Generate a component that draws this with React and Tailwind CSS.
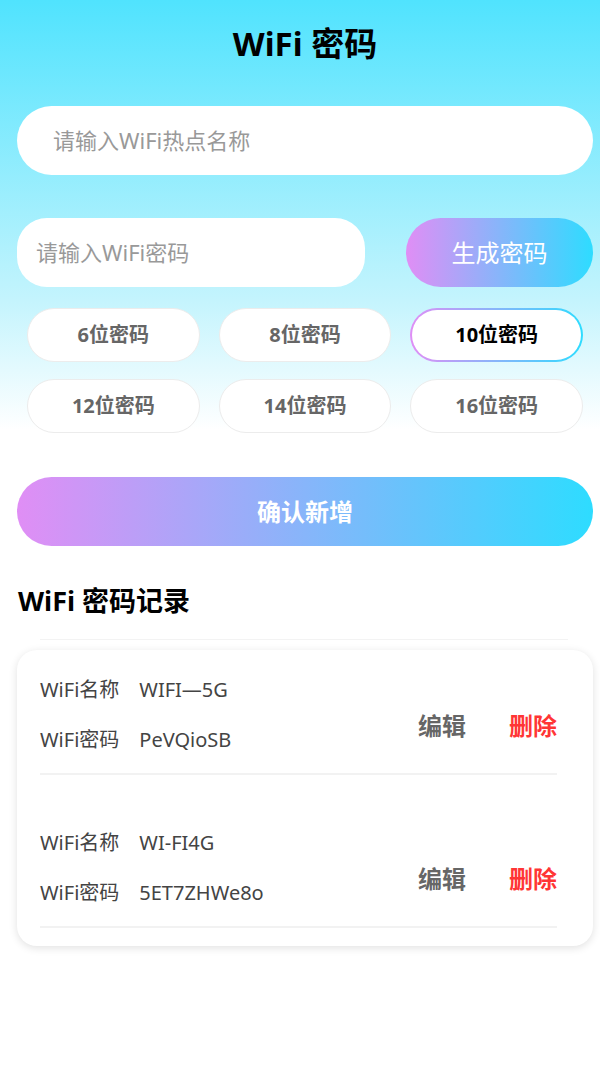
import { useState } from "react";

const FONT = { fontFamily: '"Noto Sans", "Noto Sans CJK SC", sans-serif' };

const lengths = [6, 8, 10, 12, 14, 16];

const records = [
  { name: "WIFI—5G", pwd: "PeVQioSB", pt: "pt-[26px]" },
  { name: "WI-FI4G", pwd: "5ET7ZHWe8o", pt: "pt-[54px]" },
];

function Chip({ n, active, onClick }) {
  if (active) {
    return (
      <button
        onClick={onClick}
        className="h-[54px] rounded-full p-[2px] bg-[linear-gradient(90deg,#e08ef5,#2edcff)]"
      >
        <div className="h-full w-full rounded-full bg-white flex items-center justify-center text-[20px] font-bold text-black">
          {n}位密码
        </div>
      </button>
    );
  }
  return (
    <button
      onClick={onClick}
      className="h-[54px] rounded-full bg-white border border-[#ececec] flex items-center justify-center text-[20px] font-bold text-[#666]"
    >
      {n}位密码
    </button>
  );
}

export default function App() {
  const [len, setLen] = useState(10);

  return (
    <div
      style={FONT}
      className="h-screen overflow-hidden pl-[17px] pr-[7px] bg-[linear-gradient(180deg,#50e3fe_0px,#c4f4fd_300px,#ffffff_430px,#ffffff_100%)]"
    >
      {/* header */}
      <h1 className="pt-[20px] h-[68px] text-center text-[33px] leading-[48px] font-bold text-black">
        WiFi 密码
      </h1>

      {/* hotspot name */}
      <div className="mt-[38px] h-[69px] rounded-full bg-white flex items-center pl-[36px]">
        <input
          placeholder="请输入WiFi热点名称"
          className="w-full bg-transparent outline-none text-[22px] placeholder:text-[#999]"
        />
      </div>

      {/* password + generate */}
      <div className="mt-[43px] flex gap-[41px]">
        <div className="flex-1 h-[69px] rounded-[30px] bg-white flex items-center pl-[19px]">
          <input
            placeholder="请输入WiFi密码"
            className="w-full bg-transparent outline-none text-[22px] placeholder:text-[#999]"
          />
        </div>
        <button className="w-[187px] h-[69px] rounded-full bg-[linear-gradient(90deg,#e08ef5,#2edcff)] text-white text-[24px]">
          生成密码
        </button>
      </div>

      {/* length chips */}
      <div className="mt-[21px] px-[10px] grid grid-cols-3 gap-x-[19px] gap-y-[17px]">
        {lengths.map((n) => (
          <Chip key={n} n={n} active={len === n} onClick={() => setLen(n)} />
        ))}
      </div>

      {/* confirm */}
      <button className="mt-[44px] w-full h-[69px] rounded-full bg-[linear-gradient(90deg,#e08ef5,#2edcff)] text-white text-[24px] font-bold">
        确认新增
      </button>

      <h2 className="mt-[37px] pl-[1px] text-[27px] leading-[36px] font-bold text-black">
        WiFi 密码记录
      </h2>

      <div className="mt-[20px] ml-[23px] mr-[25px] h-px bg-[#f3f3f3]" />

      {/* records */}
      <div className="mt-[10px] rounded-[20px] bg-white shadow-[0_2px_8px_rgba(0,0,0,0.12)] pl-[23px] pr-[36px] pb-[18px]">
        {records.map((r) => (
          <div key={r.pwd} className={`${r.pt} pb-[19px] border-b-2 border-[#f2f2f2]`}>
            <div className="flex items-center">
              <div className="flex-1 text-[20px] leading-[28px] text-[#444]">
                <div className="flex">
                  <span>WiFi名称</span>
                  <span className="ml-[20px]">{r.name}</span>
                </div>
                <div className="flex mt-[22px]">
                  <span>WiFi密码</span>
                  <span className="ml-[20px]">{r.pwd}</span>
                </div>
              </div>
              <div className="flex gap-[43px] mt-[22px] text-[24px] font-bold">
                <button className="text-[#666]">编辑</button>
                <button className="text-[#ff3535]">删除</button>
              </div>
            </div>
          </div>
        ))}
      </div>
    </div>
  );
}
